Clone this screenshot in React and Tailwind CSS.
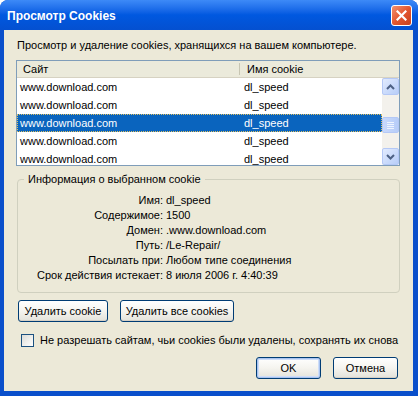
import React from "react";

const font = { fontFamily: '"Liberation Sans", Arial, sans-serif' };

function Btn({ children, className = "", def = false }) {
  return (
    <div
      className={`flex items-center justify-center h-[22px] rounded-[3px] border border-[#003C74] bg-gradient-to-b from-[#FFFFFF] via-[#F5F4EF] to-[#E3E2DA] text-[11px] text-black ${def ? "shadow-[inset_0_0_0_1px_#A8C3F0,inset_0_0_0_2px_#CEDDF8]" : "shadow-[inset_0_-1px_0_#D6D0C5]"} ${className}`}
    >
      {children}
    </div>
  );
}

function ScrollBtn({ dir }) {
  return (
    <div className="w-[17px] h-[17px] rounded-[2px] border border-[#B4C8F6] bg-gradient-to-br from-[#E2EBFE] to-[#B7CDF8] flex items-center justify-center">
      <svg width="9" height="6" viewBox="0 0 9 6">
        {dir === "up" ? (
          <path d="M1 5 L4.5 1.5 L8 5" stroke="#4D6185" strokeWidth="2" fill="none" />
        ) : (
          <path d="M1 1 L4.5 4.5 L8 1" stroke="#4D6185" strokeWidth="2" fill="none" />
        )}
      </svg>
    </div>
  );
}

export default function App() {
  const rows = [0, 1, 2, 3, 4];
  const info = [
    ["Имя:", "dl_speed"],
    ["Содержимое:", "1500"],
    ["Домен:", ".www.download.com"],
    ["Путь:", "/Le-Repair/"],
    ["Посылать при:", "Любом типе соединения"],
    ["Срок действия истекает:", "8 июля 2006 г. 4:40:39"],
  ];
  return (
    <div className="w-[418px] h-[396px] bg-[#0A4FCB] rounded-t-[8px] flex flex-col overflow-hidden" style={font}>
      <div className="h-[30px] shrink-0 flex items-center justify-between pl-[7px] pr-[6px] bg-gradient-to-b from-[#3D8AF7] via-[#0058E0] to-[#0450D0]">
        <div className="text-white font-bold text-[12px] pt-[1px]" style={{ fontFamily: '"Liberation Sans", Arial, sans-serif' }}>
          Просмотр Cookies
        </div>
        <div className="w-[21px] h-[21px] rounded-[3px] border border-white bg-gradient-to-br from-[#F2906E] via-[#E3562F] to-[#C8401C] flex items-center justify-center">
          <svg width="11" height="11" viewBox="0 0 11 11">
            <path d="M1.5 1.5 L9.5 9.5 M9.5 1.5 L1.5 9.5" stroke="white" strokeWidth="2.2" strokeLinecap="square" />
          </svg>
        </div>
      </div>
      <div className="flex-1 ml-[4px] mr-[5px] mb-[5px] bg-[#ECE9D8] flex flex-col text-[11px] text-black">
        <div className="pl-[13px] pt-[9px] h-[30px] leading-[13px]">
          Просмотр и удаление cookies, хранящихся на вашем компьютере.
        </div>
        <div className="ml-[12px] w-[384px] h-[106px] border border-[#7F9DB9] bg-white flex flex-col overflow-hidden">
          <div className="h-[17px] shrink-0 flex bg-[#EBEADB] border-b border-[#D6D2C2] leading-[16px]">
            <div className="w-[223px] pl-[6px] border-r border-[#C7C5B2] my-[2px] leading-[12px]">Сайт</div>
            <div className="pl-[7px] my-[2px] leading-[12px]">Имя cookie</div>
          </div>
          <div className="flex flex-1 min-h-0">
            <div className="flex-1 flex flex-col">
              {rows.map((i) => (
                <div
                  key={i}
                  className={`h-[18px] shrink-0 flex items-center ${i === 2 ? "bg-[#0A64BE] text-white outline-1 outline-dotted outline-[#E0C060] -outline-offset-1" : ""}`}
                >
                  <div className="w-[223px] pl-[3px]">www.download.com</div>
                  <div className="pl-[4px]">dl_speed</div>
                </div>
              ))}
            </div>
            <div className="w-[17px] bg-[#F3F1EC] flex flex-col items-center">
              <ScrollBtn dir="up" />
              <div className="h-[22px]" />
              <div className="w-[17px] h-[16px] rounded-[2px] border border-[#B4C8F6] bg-gradient-to-r from-[#C9D9FC] to-[#B7CDF8] flex flex-col items-center justify-center gap-[1px]">
                <div className="w-[7px] h-[1px] bg-[#EEF4FE]" />
                <div className="w-[7px] h-[1px] bg-[#EEF4FE]" />
                <div className="w-[7px] h-[1px] bg-[#EEF4FE]" />
                <div className="w-[7px] h-[1px] bg-[#EEF4FE]" />
              </div>
              <div className="flex-1" />
              <ScrollBtn dir="down" />
            </div>
          </div>
        </div>
        <div className="relative ml-[13px] mt-[13px] w-[383px] h-[114px] border border-[#D0D0BF] rounded-[4px] pt-[13px]">
          <div className="absolute -top-[7px] left-[6px] px-[4px] bg-[#ECE9D8] leading-[13px]">
            Информация о выбранном cookie
          </div>
          <div className="flex flex-col">
            {info.map(([k, v]) => (
              <div key={k} className="h-[15px] flex leading-[15px]">
                <div className="w-[145px] text-right">{k}</div>
                <div className="pl-[3px]">{v}</div>
              </div>
            ))}
          </div>
        </div>
        <div className="flex gap-[12px] ml-[14px] mt-[7px]">
          <Btn className="w-[90px]">Удалить cookie</Btn>
          <Btn className="w-[114px]">Удалить все cookies</Btn>
        </div>
        <div className="flex items-center ml-[17px] mt-[12px] gap-[6px]">
          <div className="w-[13px] h-[13px] border border-[#1C5180] bg-gradient-to-br from-[#DCDCD7] to-[#FFFFFF]" />
          <div className="leading-[13px]">Не разрешать сайтам, чьи cookies были удалены, сохранять их снова</div>
        </div>
        <div className="flex justify-end gap-[12px] mr-[15px] mt-[10px]">
          <Btn className="w-[65px]" def>OK</Btn>
          <Btn className="w-[65px]">Отмена</Btn>
        </div>
      </div>
    </div>
  );
}
